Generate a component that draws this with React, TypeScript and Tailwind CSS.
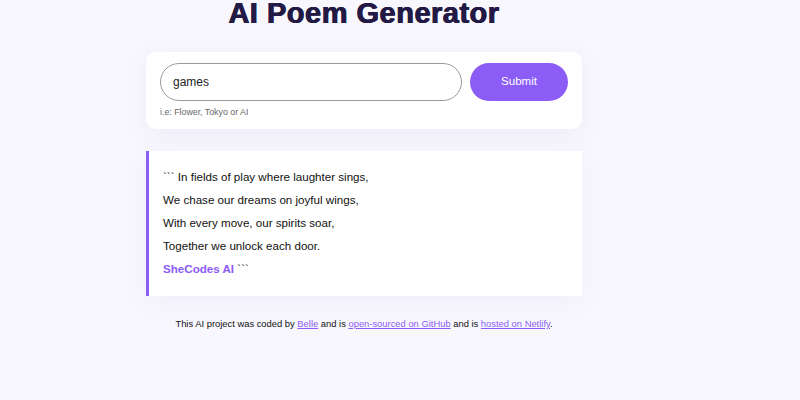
export default function App() {
  return (
    <div className="min-h-[400px] w-full bg-[#f8f7fd] font-['Liberation_Sans',Arial,sans-serif] overflow-hidden">
      <div className="w-[728px] flex flex-col items-center">
        <h1 className="mt-[-5px] h-[37px] text-[29px] leading-[36px] font-black text-[#221a44] tracking-[0.5px] [text-shadow:0.5px_0_0_#221a44,-0.5px_0_0_#221a44]">
          AI Poem Generator
        </h1>
        <div className="mt-[20px] w-[436px] bg-white rounded-[10px] shadow-[0_6px_24px_rgba(120,100,200,0.08)] pt-[11px] px-[14px] pb-[11px]">
          <div className="flex gap-[8px]">
            <input
              readOnly
              value="games"
              className="w-[302px] h-[38px] rounded-full border border-[#9a9aa0] px-[12px] text-[12px] text-[#222] outline-none font-['Liberation_Sans',Arial,sans-serif]"
            />
            <button className="w-[98px] h-[38px] rounded-full bg-[#8c5cf6] text-white text-[11.5px] font-['Liberation_Sans',Arial,sans-serif]">
              Submit
            </button>
          </div>
          <div className="mt-[5px] text-[8.8px] leading-[12px] text-[#666]">i.e: Flower, Tokyo or AI</div>
        </div>
        <div className="mt-[22px] w-[436px] bg-white border-l-[3px] border-[#8c5cf6] pl-[14px] pt-[14px] pb-[16px] text-[11.6px] leading-[23px] text-[#111] shadow-[0_6px_24px_rgba(120,100,200,0.06)]">
          <div>``` In fields of play where laughter sings,</div>
          <div>We chase our dreams on joyful wings,</div>
          <div>With every move, our spirits soar,</div>
          <div>Together we unlock each door.</div>
          <div>
            <strong className="font-bold text-[#8c5cf6]">SheCodes AI</strong> ```
          </div>
        </div>
        <div className="mt-[22px] text-[9.4px] leading-[12px] text-[#111]">
          This AI project was coded by{" "}
          <a className="text-[#8c5cf6] underline">Belle</a> and is{" "}
          <a className="text-[#8c5cf6] underline">open-sourced on GitHub</a> and is{" "}
          <a className="text-[#8c5cf6] underline">hosted on Netlify</a>.
        </div>
      </div>
    </div>
  );
}
